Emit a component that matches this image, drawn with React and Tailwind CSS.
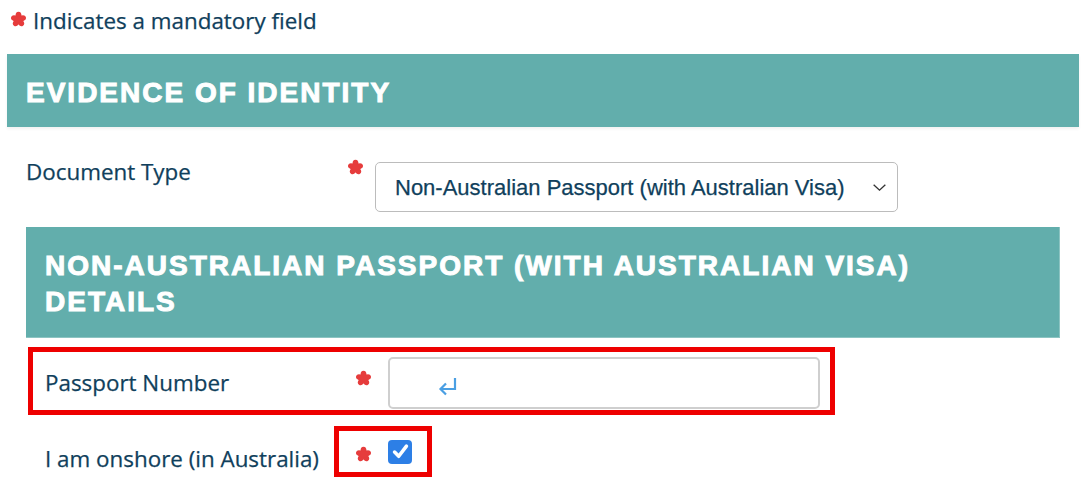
import React from 'react';

const Star = ({ className = '' }) => (
  <svg viewBox="0 0 20 20" className={`h-[17px] w-[17px] blur-[0.5px] ${className}`}>
    {[0, 72, 144, 216, 288].map(a => (
      <ellipse key={a} cx="10" cy="5.6" rx="3.5" ry="4.7" fill="#e63c3c" transform={`rotate(${a} 10 10)`} />
    ))}
    <circle cx="10" cy="10" r="4.2" fill="#e63c3c" />
  </svg>
);

export default function App() {
  return (
    <div className="w-[1092px] h-[488px] overflow-hidden bg-white text-[#103f5c] font-['Open_Sans',sans-serif] [-webkit-text-stroke:0.25px_#103f5c]">
      {/* legend */}
      <div className="h-[54px] pl-[10px] pt-[6px] flex items-start gap-[6px]">
        <Star className="mt-[5px]" />
        <span className="text-[22.4px] leading-[30px]">Indicates a mandatory field</span>
      </div>

      <div className="ml-[7px] w-[1072px]">
        <div className="h-[73px] bg-[#62aeac] pl-[19px] pt-[21px] shadow-[0_2px_3px_rgba(0,0,0,0.06)]">
          <h2 className="font-['Liberation_Sans',Arial,sans-serif] font-bold text-white text-[28px] leading-[36px] tracking-[2px] [-webkit-text-stroke:1px_white]">
            EVIDENCE OF IDENTITY
          </h2>
        </div>

        <div className="px-[19px]">
          {/* document type */}
          <div className="mt-[30px] flex items-start">
            <label className="w-[321px] text-[22.4px] leading-[30px]">Document Type</label>
            <div className="w-[28px] pt-[2px]">
              <Star />
            </div>
            <div className="mt-[5px] w-[523px] h-[50px] border border-[#bcbcbc] rounded-[5px] flex items-center justify-between pl-[19px] pr-[9px] font-['Liberation_Sans',Arial,sans-serif] text-[22px]">
              <span>Non-Australian Passport (with Australian Visa)</span>
              <svg viewBox="0 0 16 16" className="w-[17px] h-[17px]" fill="none" stroke="#333" strokeWidth="1.3">
                <path d="M2.5 5.5 8 10.5l5.5-5" />
              </svg>
            </div>
          </div>

          <div className="mt-[15px] h-[111px] bg-[#62aeac] border-r border-b border-[#8cc4c2] pl-[19px] pt-[21px]">
            <h3 className="font-['Liberation_Sans',Arial,sans-serif] font-bold text-white text-[28px] leading-[36px] tracking-[2px] whitespace-nowrap [-webkit-text-stroke:1px_white]">
              NON-AUSTRALIAN PASSPORT (WITH AUSTRALIAN VISA)
              <br />
              DETAILS
            </h3>
          </div>

          {/* passport number */}
          <div className="mt-[9px] ml-[2px] w-[807px] h-[68px] border-[5px] border-[#ee0000] flex items-start">
            <label className="pl-[12px] w-[322px] mt-[16px] text-[22.4px] leading-[30px]">Passport Number</label>
            <div className="w-[33px] mt-[18px]">
              <Star />
            </div>
            <div className="mt-[5px] w-[432px] h-[52px] border-2 border-[#cfcfcf] rounded-[5px] flex items-center pl-[48px]">
              <svg viewBox="0 0 20 20" className="w-[20px] h-[20px] mt-[6px]" fill="none" stroke="#4a9fe3" strokeWidth="2.2">
                <path d="M17 2v11H2.5" />
                <path d="M8 7.5 2.5 13 8 18.5" />
              </svg>
            </div>
          </div>

          {/* onshore */}
          <div className="mt-[11px] flex items-start">
            <label className="pl-[19px] w-[308px] mt-[18px] text-[22.4px] leading-[30px]">I am onshore (in Australia)</label>
            <div className="w-[98px] h-[51px] border-[5px] border-[#ee0000] flex items-center pl-[16px] gap-[16px]">
              <Star className="mt-[6px]" />
              <div className="w-[24px] h-[24px] rounded-[4px] bg-[#2d7fe6] flex items-center justify-center">
                <svg viewBox="0 0 16 16" className="w-[19px] h-[19px]" fill="none" stroke="white" strokeWidth="3" strokeLinecap="round" strokeLinejoin="round">
                  <path d="M3 8.5 6.5 12 13 3.5" />
                </svg>
              </div>
            </div>
          </div>
        </div>
      </div>
    </div>
  );
}
